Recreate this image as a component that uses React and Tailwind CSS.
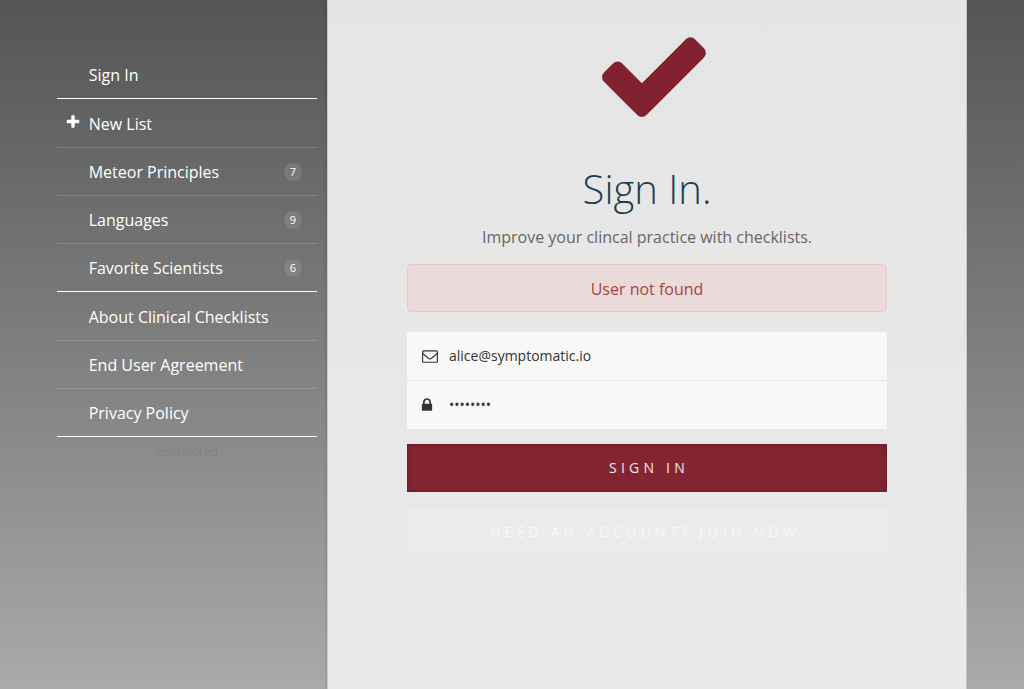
const groups = [
  [{ t: "Sign In" }],
  [{ t: "New List", plus: true }, { t: "Meteor Principles", n: 7 }, { t: "Languages", n: 9 }, { t: "Favorite Scientists", n: 6 }],
  [{ t: "About Clinical Checklists" }, { t: "End User Agreement" }, { t: "Privacy Policy" }],
];

const paths = {
  check: "M1671 566q0 40-28 68l-724 724-136 136q-28 28-68 28t-68-28l-136-136-362-362q-28-28-28-68t28-68l136-136q28-28 68-28t68 28l294 295 656-657q28-28 68-28t68 28l136 136q28 28 28 68z",
  plus: "M1600 736v192q0 40-28 68t-68 28h-416v416q0 40-28 68t-68 28h-192q-40 0-68-28t-28-68v-416h-416q-40 0-68-28t-28-68v-192q0-40 28-68t68-28h416v-416q0-40 28-68t68-28h192q40 0 68 28t28 68v416h416q40 0 68 28t28 68z",
  mail: "M1664 1504v-768q-32 36-69 66-268 206-426 338-51 43-83 67t-86.500 48.500-102.500 24.500h-2q-48 0-102.500-24.500t-86.500-48.500-83-67q-158-132-426-338-37-30-69-66v768q0 13 9.500 22.500t22.500 9.500h1472q13 0 22.500-9.500t9.500-22.500zm0-1051v-24.500l-.5-13-3-12.500-5.500-9-9-7.500-14-2.500h-1472q-13 0-22.500 9.500t-9.500 22.500q0 168 147 284 193 152 401 317 6 5 35 29.500t46 37.500 44.500 31.500 50.500 27.500 43 9h2q20 0 43-9t50.500-27.500 44.500-31.500 46-37.500 35-29.500q208-165 401-317 54-43 100.500-115.500t46.500-131.500zm128-37v1088q0 66-47 113t-113 47h-1472q-66 0-113-47t-47-113v-1088q0-66 47-113t113-47h1472q66 0 113 47t47 113z",
  lock: "M640 768h512v-192q0-106-75-181t-181-75-181 75-75 181v192zm832 96v576q0 40-28 68t-68 28h-960q-40 0-68-28t-28-68v-576q0-40 28-68t68-28h32v-192q0-184 132-316t316-132 316 132 132 316v192h32q40 0 68 28t28 68z",
};

function Icon({ name, className }) {
  return (
    <svg viewBox="0 0 1792 1792" fill="currentColor" className={className}>
      <path d={paths[name]} />
    </svg>
  );
}

function Row({ item }) {
  return (
    <a className="flex h-12 items-center border-b border-white/15 pr-[15px] pl-2 text-white last:border-white">
      <span className="w-[23.7px] shrink-0">
        {item.plus && <Icon name="plus" className="mb-[3px] h-4 w-4" />}
      </span>
      <span className="flex-1">{item.t}</span>
      {item.n && (
        <span className="flex h-[18px] w-[18px] items-center justify-center rounded-full bg-white/10 text-[11px] leading-none">
          {item.n}
        </span>
      )}
    </a>
  );
}

export default function App() {
  return (
    <div className="flex h-[689px] w-[1024px] overflow-hidden bg-linear-to-b from-[#555] to-[#aaa] font-['Open_Sans',sans-serif] text-[16px] leading-6">
      <nav className="w-[327px] pt-[50px] pr-[10px] pl-[57px]">
        {groups.map((g, i) => (
          <div key={i} className="pt-px">
            {g.map((item) => <Row key={item.t} item={item} />)}
          </div>
        ))}
        <div className="mt-[2px] text-center text-[12.8px] text-[#808080]">connected</div>
      </nav>
      <main className="flex w-[640px] flex-col items-center border-x border-[#c8c8c8] bg-linear-to-b from-[#e5e5e5] to-[#eaeaea] px-[79px] shadow-[-1px_0_3px_rgba(0,0,0,0.12)]">
        <Icon name="check" className="mt-[15px] ml-[14px] h-[120px] w-[120px] shrink-0 text-[#82212f]" />
        <h1 className="mt-[30px] text-[40px] leading-[48px] font-light text-[#1c3f53]">Sign In.</h1>
        <p className="mt-[12px] text-[#666]">Improve your clincal practice with checklists.</p>
        <div className="mt-[15px] flex h-12 w-full items-center justify-center rounded border border-[#e8c8cd] bg-[#ebdada] pt-[2px] text-[#a94442]">
          User not found
        </div>
        <div className="mt-5 flex h-[97px] w-full flex-col bg-[#f8f8f8] text-[14px] text-[#333]">
          <div className="flex h-[49px] items-center border-b border-[#e6e6e6] pl-[15px]">
            <Icon name="mail" className="h-4 w-4" />
            <span className="ml-[11px]">alice@symptomatic.io</span>
          </div>
          <div className="flex h-12 items-center pl-3">
            <Icon name="lock" className="h-4 w-4" />
            <span className="ml-[14px]">••••••••</span>
          </div>
        </div>
        <button className="mt-[15px] h-12 w-full bg-[#832431] pl-1 text-[14px] tracking-[4.2px] text-white/90 shadow-[inset_0_0_4px_rgba(0,0,0,0.3)]">
          SIGN IN
        </button>
        <button className="mt-4 h-12 w-full bg-[#ebebeb] pl-1 text-[14px] tracking-[4.2px] text-[#f8f8f8]">
          NEED AN ACCOUNT? JOIN NOW.
        </button>
      </main>
    </div>
  );
}
